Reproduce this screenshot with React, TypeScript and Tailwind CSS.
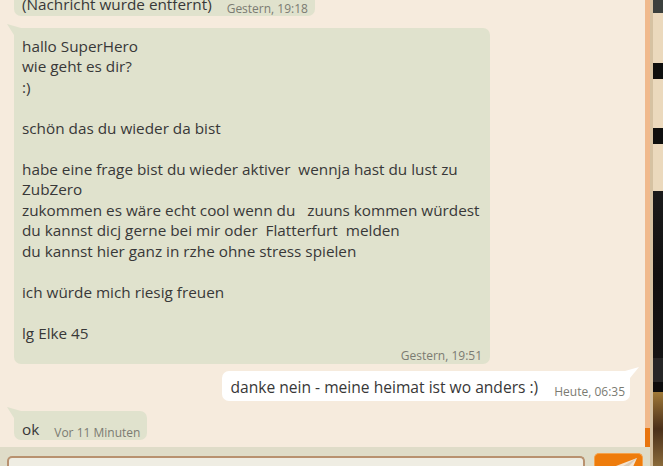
import React from "react";

const bubbleText = `hallo SuperHero
wie geht es dir?
:)

schön das du wieder da bist

habe eine frage bist du wieder aktiver  wennja hast du lust zu
ZubZero
zukommen es wäre echt cool wenn du   zuuns kommen würdest
du kannst dicj gerne bei mir oder  Flatterfurt  melden
du kannst hier ganz in rzhe ohne stress spielen

ich würde mich riesig freuen

lg Elke 45`;

const TailLeft = ({ color }: { color: string }) => (
  <svg className="absolute left-[-7px] top-[-4px]" width="14" height="12" viewBox="0 0 14 12">
    <polygon points="0,0 14,4 7,11" fill={color} />
  </svg>
);

const TailRight = ({ color }: { color: string }) => (
  <svg className="absolute right-[-9px] top-[-4px]" width="14" height="12" viewBox="0 0 14 12">
    <polygon points="14,0 0,4 5,11" fill={color} />
  </svg>
);

const Stamp = ({ children }: { children: React.ReactNode }) => (
  <span className="relative top-[1px] text-[12px] leading-[14px] text-[#7b7b72] whitespace-nowrap">{children}</span>
);

// short message with the time on the same line
const InlineBubble = ({
  text,
  time,
  mine,
}: {
  text: string;
  time: string;
  mine?: boolean;
}) => (
  <div
    className={
      mine
        ? "relative self-end mr-[15px] flex items-end gap-[16px] bg-white rounded-[7px] rounded-tr-none pl-[8px] pr-[5px] pt-[6px] pb-[3px]"
        : "relative self-start ml-[14px] flex items-end gap-[15px] bg-[#e0e2cd] rounded-[7px] rounded-tl-none pl-[8px] pr-[7px] pt-[8px] pb-[1px]"
    }
  >
    {mine ? <TailRight color="#ffffff" /> : <TailLeft color="#e0e2cd" />}
    <span
      className={
        mine
          ? "text-[15.6px] leading-[20.5px] text-[#383838] whitespace-nowrap"
          : "text-[15.3px] leading-[20.5px] text-[#383838] whitespace-nowrap"
      }
    >
      {text}
    </span>
    <Stamp>{time}</Stamp>
  </div>
);

export default function App() {
  return (
    <div
      className="w-[663px] h-[466px] flex overflow-hidden bg-[#f6ebdd]"
      style={{ fontFamily: '"Open Sans", "Liberation Sans", sans-serif' }}
    >
      <div className="w-[650px] flex flex-col">
        <div className="flex-1 flex min-h-0">
          {/* chat history, scrolled to the end */}
          <div className="w-[645px] flex flex-col justify-end gap-[10px] pb-[7px] overflow-hidden bg-[#f6ebdd]">
            <InlineBubble text="(Nachricht wurde entfernt)" time="Gestern, 19:18" />

            <div className="relative self-start ml-[14px] mt-[2px] mb-[-3px] w-[476px] bg-[#e0e2cd] rounded-[7px] rounded-tl-none pl-[8px] pr-[8px] pt-[8px] pb-[1px]">
              <TailLeft color="#e0e2cd" />
              <div className="text-[15.3px] leading-[20.5px] text-[#383838] whitespace-pre">{bubbleText}</div>
              <div className="flex justify-end pt-[6px]">
                <span className="text-[12px] leading-[14px] text-[#7b7b72] whitespace-nowrap">Gestern, 19:51</span>
              </div>
            </div>

            <InlineBubble text="danke nein - meine heimat ist wo anders :)" time="Heute, 06:35" mine />

            <InlineBubble text="ok" time="Vor 11 Minuten" />
          </div>

          {/* scrollbar */}
          <div className="w-[5px] flex flex-col justify-end bg-[#f0b98c]">
            <div className="h-[19px] bg-[#e8740e]" />
          </div>
        </div>

        {/* input bar */}
        <div className="h-[19px] flex items-start bg-[#dfdcc8] pl-[7px]">
          <div className="mt-[9px] w-[578px] h-[14px] border-2 border-b-0 border-[#b8916f] rounded-t-[5px] bg-[#efede3]" />
          <div className="relative ml-[9px] mt-[6px] w-[49px] h-[18px] rounded-t-[5px] border border-b-0 border-[#f4a24c] bg-[#ee7c0c] overflow-hidden">
            <svg className="absolute right-[4px] top-[3px]" width="30" height="12" viewBox="0 0 30 12">
              <polygon points="0,12 29,1 24,12" fill="#f3e3d0" />
              <polygon points="10,12 29,1 18,12" fill="#d9cbb8" />
            </svg>
          </div>
        </div>
      </div>

      {/* separator and game window edge */}
      <div className="w-[3px] bg-[#d6c2a2]" />
      <div className="w-[10px] flex flex-col">
        <div className="h-[13px] bg-[#3b403d]" />
        <div className="h-[50px] bg-[#ebd9bd]" />
        <div className="h-[16px] bg-[#0e0f0e]" />
        <div className="h-[49px] bg-[#ebd9bd]" />
        <div className="h-[16px] bg-[#0e0f0e]" />
        <div className="h-[47px] bg-[#ebd9bd]" />
        <div className="h-[167px] bg-gradient-to-b from-[#1b1b1b] via-[#101010] to-[#141414]" />
        <div className="h-[24px] bg-[#262626]" />
        <div className="h-[10px] bg-[#0c0c0c]" />
        <div className="flex-1 bg-gradient-to-b from-[#a07a38] via-[#4a301a] to-[#8a6a3a]" />
      </div>
    </div>
  );
}
